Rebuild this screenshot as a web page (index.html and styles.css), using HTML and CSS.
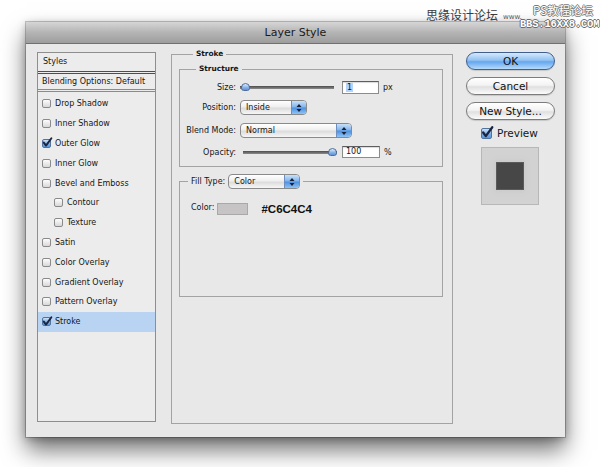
FILE: index.html
```html
<!DOCTYPE html>
<html>
<head>
<meta charset="utf-8">
<title>Layer Style</title>
<link rel="stylesheet" href="styles.css">
</head>
<body>
<div class="stage">
  <div class="watermark">
    <span class="wm-cn">思缘设计论坛</span><span class="wm-www">www.</span>
    <span class="wm-ps">PS教程论坛</span>
    <span class="wm-bbs">BBS.16XX8.COM</span>
  </div>
  <div class="win">
    <div class="titlebar">Layer Style</div>
    <div class="content">
      <div class="styles-panel">
        <div class="sp-head">Styles</div>
        <div class="sp-blend">Blending Options: Default</div>
        <ul class="sp-list">
          <li class="row"><span class="cb"></span>Drop Shadow</li>
          <li class="row"><span class="cb"></span>Inner Shadow</li>
          <li class="row"><span class="cb on"><svg viewBox="0 0 10 10" width="10" height="10"><path d="M1.8 4.6 L4 7.6 L9.4 0.2" /></svg></span>Outer Glow</li>
          <li class="row"><span class="cb"></span>Inner Glow</li>
          <li class="row"><span class="cb"></span>Bevel and Emboss</li>
          <li class="row sub"><span class="cb"></span>Contour</li>
          <li class="row sub"><span class="cb"></span>Texture</li>
          <li class="row"><span class="cb"></span>Satin</li>
          <li class="row"><span class="cb"></span>Color Overlay</li>
          <li class="row"><span class="cb"></span>Gradient Overlay</li>
          <li class="row"><span class="cb"></span>Pattern Overlay</li>
          <li class="row sel"><span class="cb on"><svg viewBox="0 0 10 10" width="10" height="10"><path d="M1.8 4.6 L4 7.6 L9.4 0.2" /></svg></span>Stroke</li>
        </ul>
      </div>

      <fieldset class="group main">
        <legend>Stroke</legend>
        <fieldset class="group structure">
          <legend>Structure</legend>
          <div class="frow r-size">
            <span class="flabel">Size:</span>
            <div class="slider start"><span class="knob"></span></div>
            <div class="field"><span class="selected">1</span></div>
            <span class="unit">px</span>
          </div>
          <div class="frow r-pos">
            <span class="flabel">Position:</span>
            <div class="select w-pos"><span class="sel-text">Inside</span><span class="sel-arrows"><svg viewBox="0 0 6 10" width="6" height="10"><path d="M3 1 L5.5 4 L0.5 4 Z M3 9 L5.5 6 L0.5 6 Z"/></svg></span></div>
          </div>
          <div class="frow r-blend">
            <span class="flabel">Blend Mode:</span>
            <div class="select w-blend"><span class="sel-text">Normal</span><span class="sel-arrows"><svg viewBox="0 0 6 10" width="6" height="10"><path d="M3 1 L5.5 4 L0.5 4 Z M3 9 L5.5 6 L0.5 6 Z"/></svg></span></div>
          </div>
          <div class="frow r-op">
            <span class="flabel">Opacity:</span>
            <div class="slider end op"><span class="knob"></span></div>
            <div class="field op-field">100</div>
            <span class="unit">%</span>
          </div>
        </fieldset>
        <fieldset class="group fill">
          <legend><span class="legend-inner"><span class="lg-label">Fill Type:</span><span class="select w-fill"><span class="sel-text">Color</span><span class="sel-arrows"><svg viewBox="0 0 6 10" width="6" height="10"><path d="M3 1 L5.5 4 L0.5 4 Z M3 9 L5.5 6 L0.5 6 Z"/></svg></span></span></span></legend>
          <div class="color-row">
            <span class="c-label">Color:</span>
            <span class="swatch"></span>
            <span class="hex">#C6C4C4</span>
          </div>
        </fieldset>
      </fieldset>

      <div class="right-col">
        <div class="btn primary">OK</div>
        <div class="btn">Cancel</div>
        <div class="btn">New Style...</div>
        <div class="preview-row"><span class="cb big on"><svg viewBox="0 0 10 10" width="12" height="12"><path d="M1.8 4.6 L4 7.6 L9.4 0.2" /></svg></span><span>Preview</span></div>
        <div class="preview-box"><div class="preview-square"></div></div>
      </div>
    </div>
  </div>
</div>
</body>
</html>
```
FILE: styles.css
```css
* { box-sizing: border-box; }
html, body { margin: 0; padding: 0; }
body {
  background: #ffffff;
  font-family: "DejaVu Sans", "Noto Sans CJK SC", sans-serif;
  font-size: 8px;
  color: #161616;
}
.stage {
  width: 600px;
  height: 467px;
  position: relative;
  padding: 22px 0 0 26px;
  overflow: hidden;
}

/* watermark overlay */
.watermark {
  position: absolute;
  top: 3px;
  left: 424px;
  width: 176px;
  height: 30px;
  z-index: 5;
}
.wm-cn {
  position: absolute;
  left: 2px;
  top: 5px;
  font-family: "Noto Sans CJK SC", sans-serif;
  font-size: 12px;
  line-height: 14px;
  color: #3a3a3a;
}
.wm-www {
  position: absolute;
  left: 79px;
  top: 10px;
  font-family: "DejaVu Sans", sans-serif;
  font-size: 7px;
  line-height: 8px;
  color: #555;
}
.wm-ps {
  position: absolute;
  left: 109px;
  top: 1px;
  font-family: "Noto Sans CJK SC", sans-serif;
  font-size: 11.5px;
  line-height: 13px;
  color: #ffffff;
  text-shadow: 1px 0 0 #7a7a7a, -1px 0 0 #7a7a7a, 0 1px 0 #7a7a7a, 0 -1px 0 #7a7a7a;
}
.wm-bbs {
  position: absolute;
  left: 96px;
  top: 15px;
  font-family: "Liberation Mono", monospace;
  font-weight: bold;
  font-size: 10.5px;
  line-height: 12px;
  color: #ffffff;
  text-shadow: 1px 0 0 #6a6a6a, -1px 0 0 #6a6a6a, 0 1px 0 #6a6a6a, 0 -1px 0 #6a6a6a;
  letter-spacing: -0.2px;
}

/* window */
.win {
  width: 539px;
  height: 415px;
  background: #e8e8e8;
  box-shadow: 0 0 0 1px rgba(0,0,0,0.22), 0 13px 22px rgba(0,0,0,0.55), 0 2px 8px rgba(0,0,0,0.25);
  display: flex;
  flex-direction: column;
}
.titlebar {
  height: 22px;
  background: linear-gradient(#d6d6d6, #b4b4b4 50%, #9d9d9d);
  border-bottom: 1px solid #707070;
  text-align: center;
  font-size: 11px;
  line-height: 22px;
  color: #1a1a1a;
}
.content {
  display: flex;
  align-items: flex-start;
  padding: 8px 10px 0 11px;
}

/* styles list */
.styles-panel {
  width: 119px;
  height: 370px;
  border: 1px solid #8e8e8e;
  background: #ececec;
  flex: none;
}
.sp-head {
  height: 21px;
  border-bottom: 3px double #4e4e4e;
  padding-left: 5px;
  line-height: 18px;
}
.sp-blend {
  height: 18px;
  border-bottom: 3px double #8a8a8a;
  padding-left: 4px;
  line-height: 15px;
}
.sp-list {
  list-style: none;
  margin: 0;
  padding: 2px 0 0;
}
.row {
  height: 19.8px;
  display: flex;
  align-items: center;
  gap: 4px;
  padding-left: 4px;
}
.row.sub { padding-left: 16px; }
.row.sel { background: #b9d3f3; }

.cb {
  width: 9px;
  height: 9px;
  border: 1px solid #8a8a8a;
  border-radius: 2px;
  background: linear-gradient(#fdfdfd, #d8d8d8);
  flex: none;
  display: inline-flex;
  align-items: center;
  justify-content: center;
  overflow: visible;
}
.cb.on {
  background: linear-gradient(#cfe2f7, #79aee6 55%, #5d98dc);
  border-color: #52739d;
}
.cb svg { overflow: visible; flex: none; }
.cb svg path {
  fill: none;
  stroke: #1b2440;
  stroke-width: 1.9;
  stroke-linecap: round;
  stroke-linejoin: round;
}
.cb.big {
  width: 11px;
  height: 11px;
}

/* group boxes */
.group {
  margin: 0;
  padding: 0;
  border: 1px solid #a3a3a3;
  min-width: 0;
}
.group > legend {
  padding: 0 3px;
  font-weight: bold;
  font-size: 7.4px;
  line-height: 10px;
}
.main {
  width: 282px;
  height: 375px;
  margin: -3px 0 0 15px;
  padding: 0 9px 0 7px;
  flex: none;
}
.main > legend { margin-left: 14px; }
.structure {
  margin-top: 5px;
  padding: 6px 0 8px 0;
}
.structure > legend { margin-left: 16px; }

.frow {
  display: flex;
  align-items: center;
}
.r-size { height: 14px; }
.r-pos { height: 15px; margin-top: 6px; }
.r-blend { height: 15px; margin-top: 8px; }
.r-op { height: 12px; margin-top: 8px; }
.flabel {
  width: 60px;
  text-align: right;
  padding-right: 4px;
  flex: none;
}

.slider {
  width: 94px;
  height: 10px;
  display: flex;
  align-items: center;
  background: linear-gradient(#4c4c4c, #8c8c8c) no-repeat center / 100% 3px;
  margin-right: 8px;
  flex: none;
}
.slider.end { justify-content: flex-end; }
.slider.op { margin-left: 3px; margin-right: 5px; }
.knob {
  width: 9px;
  height: 8px;
  border: 1px solid #4d6e9c;
  border-radius: 5px 5px 3px 3px;
  background: linear-gradient(#e4eefb, #8cb5e8 55%, #5f92d6);
}
.slider.start .knob { margin-left: 1px; }

.field {
  width: 37px;
  height: 13px;
  background: #ffffff;
  border: 1px solid #8c8c8c;
  border-top-color: #5e5e5e;
  box-shadow: inset 0 1px 1px rgba(0,0,0,0.15);
  padding-left: 3px;
  line-height: 11px;
  flex: none;
}
.op-field { width: 38px; height: 12px; line-height: 10px; }
.selected { background: #b4d3fb; padding: 0 1px; }
.unit { margin-left: 4px; }

.select {
  height: 15px;
  display: flex;
  border: 1px solid #8a8a8a;
  border-radius: 4px;
  background: linear-gradient(#ffffff, #efefef 45%, #dcdcdc 55%, #f6f6f6);
  overflow: hidden;
  flex: none;
}
.sel-text {
  flex: 1;
  padding-left: 5px;
  line-height: 13px;
}
.sel-arrows {
  width: 15px;
  display: flex;
  align-items: center;
  justify-content: center;
  border-left: 1px solid #6d8fbf;
  background: linear-gradient(#c9e0f8, #7fb3ec 48%, #4b8fe0 52%, #8fc4f4);
}
.sel-arrows svg path { fill: #1a2236; }
.w-pos { width: 67px; }
.w-blend { width: 112px; }
.w-fill { width: 72px; }

.fill {
  margin-top: 7px;
  height: 123px;
}
.fill > legend {
  margin-left: 8px;
  font-weight: normal;
  font-size: 8px;
  line-height: 15px;
}
.legend-inner {
  display: flex;
  align-items: center;
  gap: 3px;
}
.color-row {
  display: flex;
  align-items: center;
  padding: 14px 0 0 11px;
  height: 26px;
}
.c-label { margin-top: -3px; }
.swatch {
  width: 31px;
  height: 12px;
  background: #c6c4c4;
  border: 1px solid #a9a9a9;
  margin-left: 3px;
}
.hex {
  margin-left: 13px;
  font-family: "Liberation Sans", sans-serif;
  font-weight: bold;
  font-size: 11.5px;
  color: #111;
}

/* right column */
.right-col {
  width: 89px;
  margin-left: 13px;
  display: flex;
  flex-direction: column;
  flex: none;
}
.btn {
  height: 18px;
  border: 1px solid #7c7c7c;
  border-radius: 9px;
  background: linear-gradient(#ffffff, #f3f3f3 45%, #e0e0e0 55%, #fbfbfb);
  text-align: center;
  font-size: 10.5px;
  line-height: 16px;
  color: #111;
  box-shadow: 0 1px 1px rgba(0,0,0,0.15);
}
.btn + .btn { margin-top: 7px; }
.btn.primary {
  border-color: #3f5f8f;
  background: linear-gradient(#d6e9fc, #93c2f1 45%, #65a6ee 55%, #b6dbfb);
}
.preview-row {
  margin-top: 6px;
  height: 14px;
  padding-left: 15px;
  display: flex;
  align-items: center;
  gap: 5px;
  font-size: 10.5px;
}
.preview-box {
  margin: 7px 0 0 15px;
  width: 58px;
  height: 58px;
  background: #d2d2d2;
  border: 1px solid #b7b7b7;
  display: flex;
  align-items: center;
  justify-content: center;
}
.preview-square {
  width: 26px;
  height: 26px;
  background: #474747;
  box-shadow: 0 0 0 1px #5a5a5a, 0 0 5px 2px rgba(200,200,200,0.9);
}
```
